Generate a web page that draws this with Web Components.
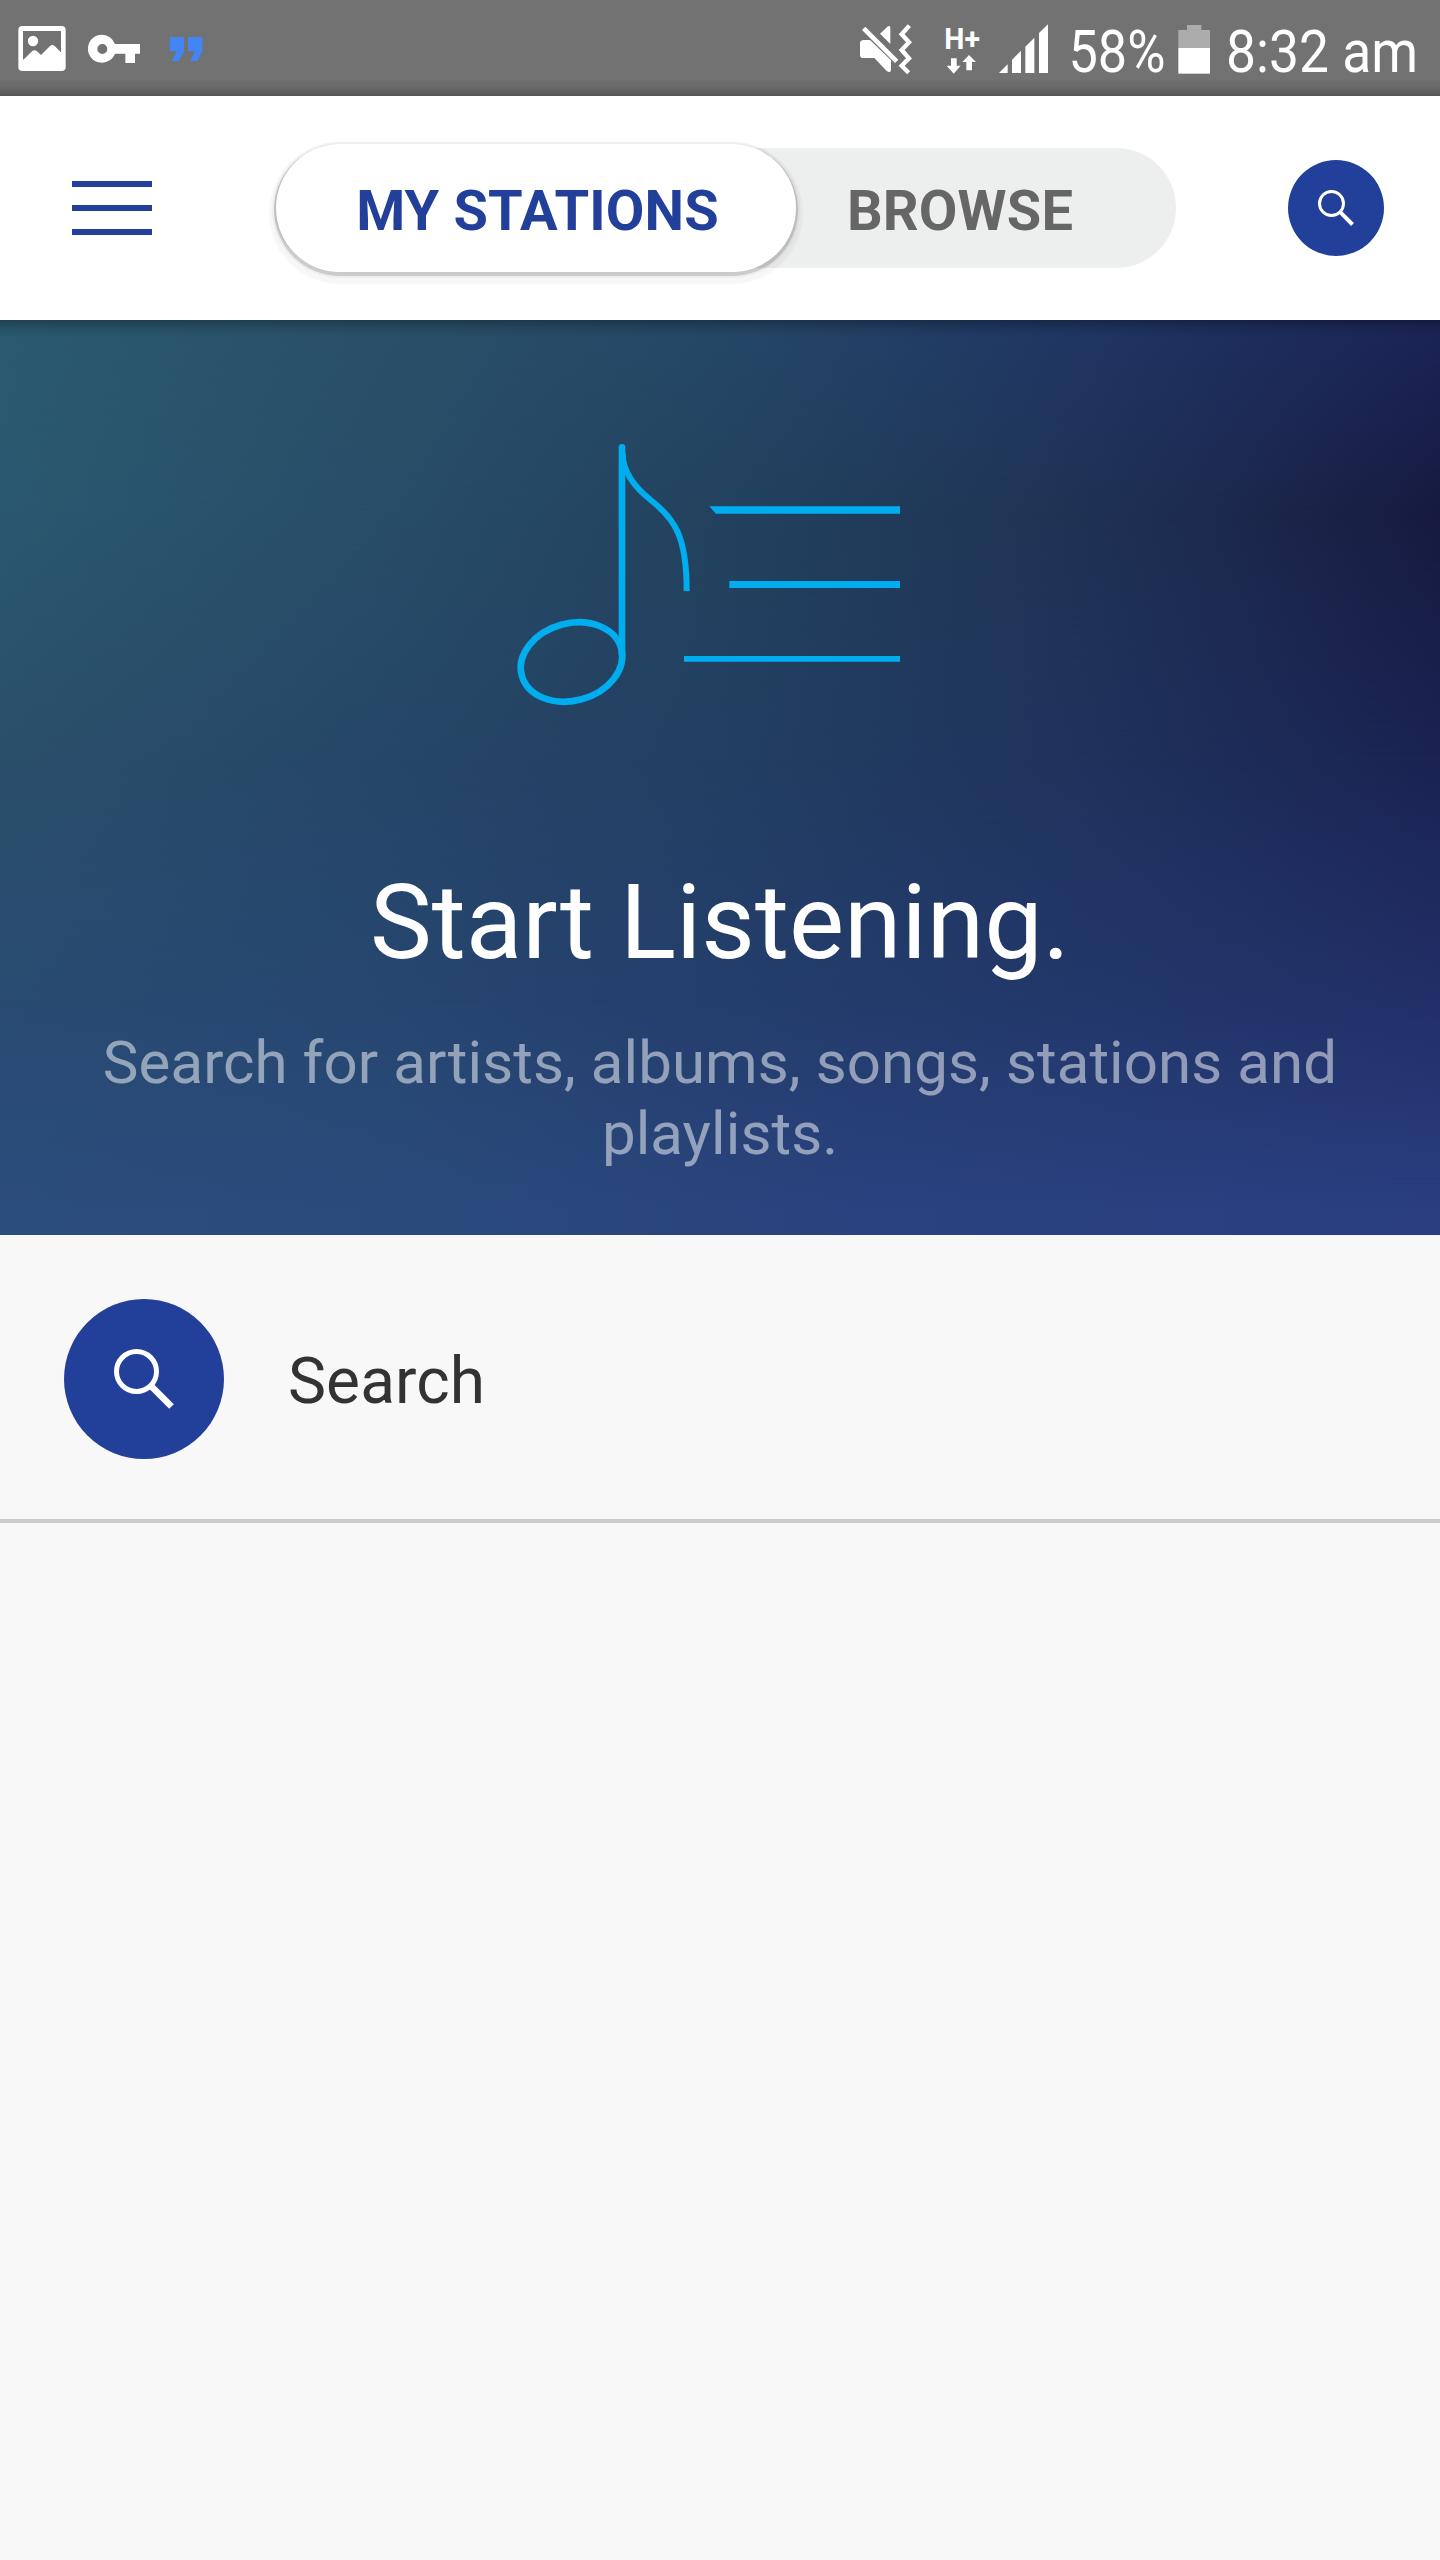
<!DOCTYPE html>
<html lang="en">
<head>
<meta charset="utf-8">
<meta name="viewport" content="width=device-width">
<title>My Stations</title>
<style>
    body {
        margin: 0;
        background: #f8f8f8;
        font-family: Roboto, "Liberation Sans", sans-serif;
    }
</style>
</head>
<body>
<radio-app></radio-app>

<script>
function defineElement(name, html) {
    const template = document.createElement('template');
    template.innerHTML = html;
    customElements.define(name, class extends HTMLElement {
        constructor() {
            super();
            this.attachShadow({ mode: 'open' });
            this.shadowRoot.appendChild(template.content.cloneNode(true));
        }
    });
}

defineElement('status-bar', `
    <style>
        :host {
            display: flex;
            justify-content: space-between;
            height: 96px;
            color: #fff;
            background: linear-gradient(#727272 78px, #6b6b6b 86px, #585456 96px);
        }
        .group {
            display: flex;
        }
        svg {
            display: block;
            height: 96px;
            overflow: visible;
            fill: currentColor;
        }
        .quote {
            color: #4385f5;
        }
        text {
            font-family: Roboto, sans-serif;
        }
    </style>
    <div class="group">
        <svg width="80" viewBox="0 0 240 288">
            <path fill-rule="evenodd" d="M67 78H185Q197 78 197 90V201Q197 213 185 213H67Q55 213 55 201V90Q55 78 67 78ZM69 93V180L97 153Q104 148 110 153L123 165L150 138Q157 132 164 138L183 157V93Z"/>
            <circle cx="99" cy="123" r="15.5"/>
        </svg>
        <svg width="80" viewBox="240 0 240 288">
            <path fill-rule="evenodd" d="M307 104A42 42 0 0 1 345 132H420V161H405V189H376V161H345A42 42 0 1 1 307 104ZM307 132A15 15 0 1 0 307 162A15 15 0 1 0 307 132Z"/>
        </svg>
        <svg class="quote" width="80" viewBox="480 0 240 288">
            <path d="M509 111H552V154L537 183H515L530 154H509ZM564 111H607V154L592 183H570L585 154H564Z"/>
        </svg>
    </div>
    <div class="group">
        <svg width="90" viewBox="45 0 270 288">
            <path d="M120 101L144 79Q151 75 151 83V132Z"/>
            <path d="M60 130Q60 120 72 120H90L153 181V210Q153 217 146 216L140 213L103 174H70Q60 174 60 164Z"/>
            <path d="M71 85L170 184" fill="none" stroke="currentColor" stroke-width="14"/>
            <path d="M208 77L185 103L207 127L185 150L207 175L185 197L206 218" fill="none" stroke="currentColor" stroke-width="13"/>
        </svg>
        <svg width="45" viewBox="315 0 135 288">
            <text x="313" y="147" font-size="87" font-weight="700" textLength="107" lengthAdjust="spacingAndGlyphs">H+</text>
            <path d="M333 175H350V197H362L341 221L320 197H333ZM387 165L408 186H396V211H379V186H367Z"/>
        </svg>
        <svg width="65" viewBox="450 0 195 288">
            <path d="M477 219L503 193V219ZM516 219V179L543 152V219ZM556 219V140L583 113V219ZM597 219V99L624 73V219Z"/>
        </svg>
        <svg width="115" viewBox="0 0 115 96">
            <text x="13.500" y="72" font-size="60" textLength="97" lengthAdjust="spacingAndGlyphs">58%</text>
        </svg>
        <svg width="50" viewBox="390 0 150 288">
            <path fill="#acacac" d="M441 75H484V90H510V144H415V90H441Z"/>
            <path d="M415 144H510V221H415Z"/>
        </svg>
        <svg width="220" viewBox="0 0 220 96">
            <text x="6" y="72" font-size="60" textLength="192" lengthAdjust="spacingAndGlyphs">8:32 am</text>
        </svg>
    </div>
`);

defineElement('search-badge', `
    <style>
        :host {
            display: flex;
            flex: none;
            align-items: center;
            justify-content: center;
            width: var(--badge-size, 96px);
            height: var(--badge-size, 96px);
            border-radius: 50%;
            background: #223f99;
        }
        svg {
            width: 37.5%;
            height: 37.5%;
            fill: none;
            stroke: #fff;
        }
    </style>
    <svg viewBox="0 0 60 60">
        <circle cx="22.5" cy="22.5" r="20" stroke-width="5"/>
        <path d="M37 37L57.5 57.5" stroke-width="6.5"/>
    </svg>
`);

defineElement('menu-button', `
    <style>
        :host {
            display: flex;
            flex-direction: column;
            gap: 18px;
            width: 80px;
        }
        span {
            height: 6px;
            background: #223f99;
        }
    </style>
    <span></span><span></span><span></span>
`);

defineElement('tab-switch', `
    <style>
        :host {
            display: flex;
            align-items: center;
            width: 902px;
            height: 120px;
            border-radius: 60px;
            background: #edefee;
            font-size: 56px;
            font-weight: 700;
            letter-spacing: .15px;
        }
        .active, .other {
            display: flex;
            align-items: center;
            justify-content: center;
            box-sizing: border-box;
            white-space: nowrap;
        }
        .active {
            width: 520px;
            height: 128px;
            margin-left: 2px;
            padding: 5px 0 0 3px;
            border-radius: 64px;
            color: #223f99;
            background: #fff;
            box-shadow: 0 2px 0 2px rgba(0, 0, 0, .14), 0 2px 1px 4px rgba(0, 0, 0, .035), 0 5px 1px 7px rgba(0, 0, 0, .03);
        }
        .other {
            width: 328px;
            padding-top: 5px;
            color: #666;
        }
    </style>
    <div class="active"><slot name="active"></slot></div>
    <div class="other"><slot name="other"></slot></div>
`);

defineElement('app-header', `
    <style>
        :host {
            display: flex;
            align-items: center;
            box-sizing: border-box;
            height: 224px;
            padding: 0 56px 0 72px;
            background: #fff;
        }
        tab-switch {
            margin-left: 122px;
        }
        search-badge {
            margin-left: auto;
        }
    </style>
    <menu-button></menu-button>
    <tab-switch>
        <span slot="active">MY STATIONS</span>
        <span slot="other">BROWSE</span>
    </tab-switch>
    <search-badge></search-badge>
`);

// Each band is a horizontal gradient that fades in over the one above it.
defineElement('color-mesh', `
    <style>
        :host {
            display: grid;
        }
        div {
            grid-area: 1 / 1;
        }
        .a { background: linear-gradient(90deg, #2b5a70, #2a5169 25%, #254868 50%, #203664 75%, #1b2558); }
        .b {
            background: linear-gradient(90deg, #2b5870, #284e69 25%, #23435f 48%, #203657 70%, #1d2b50 83%, #171a40);
            -webkit-mask: linear-gradient(transparent, #000 21%);
        }
        .c {
            background: linear-gradient(90deg, #2a4f6b, #264768 25%, #233f62 50%, #1f335c 75%, #1a2352);
            -webkit-mask: linear-gradient(transparent 21%, #000 48%);
        }
        .d {
            background: linear-gradient(90deg, #284b71, #274770 25%, #243e6c 50%, #22366a 80%, #222f68);
            -webkit-mask: linear-gradient(transparent 48%, #000 74%);
        }
        .e {
            background: linear-gradient(90deg, #2b4d7d, #2a4a7c 30%, #2a427f 60%, #2a3e80);
            -webkit-mask: linear-gradient(transparent 74%, #000 97%);
        }
        .shade { background: linear-gradient(rgba(0, 0, 0, .28), rgba(0, 0, 0, .1) 8px, transparent 18px); }
    </style>
    <div class="a"></div>
    <div class="b"></div>
    <div class="c"></div>
    <div class="d"></div>
    <div class="e"></div>
    <div class="shade"></div>
`);

defineElement('start-hero', `
    <style>
        :host {
            display: grid;
            height: 915px;
        }
        color-mesh, .content {
            grid-area: 1 / 1;
        }
        .content {
            z-index: 1;
            display: flex;
            flex-direction: column;
            align-items: center;
            padding-top: 100px;
            color: #fff;
            text-align: center;
        }
        svg {
            display: block;
            width: 460px;
            height: 310px;
            margin-right: 20px;
            fill: none;
            stroke: #00aeef;
        }
        h1 {
            margin: 132px 0 0;
            font-size: 104px;
            font-weight: 400;
            line-height: 122px;
        }
        p {
            width: 1280px;
            margin: 43px 0 0;
            font-size: 60px;
            line-height: 71px;
            letter-spacing: .08px;
            color: rgba(255, 255, 255, .5);
        }
    </style>
    <color-mesh></color-mesh>
    <div class="content">
        <svg viewBox="0 0 1380 930">
            <path d="M426 82V705" stroke-width="20" stroke-linecap="round"/>
            <path d="M428 100C428 150 455 195 512 240C585 297 620 350 620 513" stroke-width="18"/>
            <ellipse cx="274.500" cy="726" rx="154.500" ry="116" stroke-width="20" transform="rotate(-15.300 274.500 726)"/>
            <path d="M688 259H1260V281H708ZM748 483H1260V504H748ZM612 708H1260V725H612Z" fill="#00aeef" stroke="none"/>
        </svg>
        <h1><slot name="title"></slot></h1>
        <p><slot></slot></p>
    </div>
`);

defineElement('action-row', `
    <style>
        :host {
            display: flex;
            align-items: center;
            gap: 64px;
            box-sizing: border-box;
            height: 288px;
            padding: 0 64px;
            border-bottom: 4px solid #cbcbcb;
            color: #333;
            font-size: 64px;
        }
        search-badge {
            --badge-size: 160px;
            margin-bottom: -4px;
        }
        span {
            padding-top: 9px;
            letter-spacing: .1px;
        }
    </style>
    <search-badge></search-badge>
    <span><slot></slot></span>
`);

defineElement('radio-app', `
    <style>
        :host {
            display: flex;
            flex-direction: column;
            min-height: 2560px;
        }
    </style>
    <status-bar></status-bar>
    <app-header></app-header>
    <start-hero>
        <span slot="title">Start Listening.</span>
        Search for artists, albums, songs, stations and playlists.
    </start-hero>
    <action-row>Search</action-row>
`);
</script>
</body>
</html>
